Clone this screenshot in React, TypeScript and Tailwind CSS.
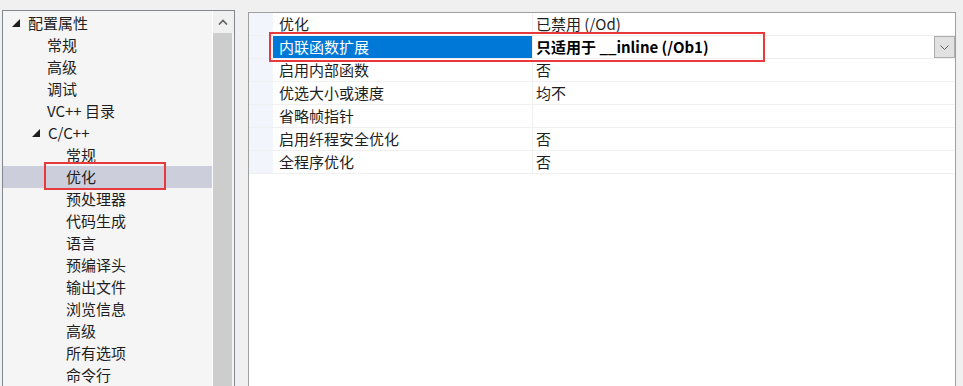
import React from "react";

type TreeItem = { label: string; level: number; expanded?: boolean; selected?: boolean };

const tree: TreeItem[] = [
  { label: "配置属性", level: 0, expanded: true },
  { label: "常规", level: 1 },
  { label: "高级", level: 1 },
  { label: "调试", level: 1 },
  { label: "VC++ 目录", level: 1 },
  { label: "C/C++", level: 1, expanded: true },
  { label: "常规", level: 2 },
  { label: "优化", level: 2, selected: true },
  { label: "预处理器", level: 2 },
  { label: "代码生成", level: 2 },
  { label: "语言", level: 2 },
  { label: "预编译头", level: 2 },
  { label: "输出文件", level: 2 },
  { label: "浏览信息", level: 2 },
  { label: "高级", level: 2 },
  { label: "所有选项", level: 2 },
  { label: "命令行", level: 2 },
];

const props = [
  { name: "优化", value: "已禁用 (/Od)" },
  { name: "内联函数扩展", value: "只适用于 __inline (/Ob1)", selected: true },
  { name: "启用内部函数", value: "否" },
  { name: "优选大小或速度", value: "均不" },
  { name: "省略帧指针", value: "" },
  { name: "启用纤程安全优化", value: "否" },
  { name: "全程序优化", value: "否" },
];

const indent = ["pl-[9px]", "pl-[29px]", "pl-[63px]"];

function Expander() {
  return (
    <svg width="8" height="8" viewBox="0 0 8 8" className="mr-[8px] shrink-0">
      <polygon points="8,0 8,8 0,8" fill="#1e1e1e" />
    </svg>
  );
}

export default function App() {
  return (
    <div
      className="relative flex h-[386px] w-[963px] overflow-hidden bg-[#f0f0f0] text-[15px] text-[#1e1e1e]"
      style={{ fontFamily: '"Microsoft YaHei UI", "Noto Sans CJK SC", "Noto Sans", sans-serif' }}
    >
      {/* tree panel */}
      <div className="ml-[2px] mt-[10px] flex h-[400px] w-[233px] border border-[#828790] bg-[#f5f5f5]">
        <div className="flex w-[209px] flex-col pt-[1px]">
          {tree.map((item, i) => (
            <div
              key={i}
              className={`flex h-[22px] items-center leading-[22px] ${item.selected ? "bg-[#cccedb]" : ""} ${
                item.expanded ? indent[item.level] : item.level === 1 ? "pl-[44px]" : indent[item.level]
              }`}
            >
              {item.expanded && <Expander />}
              <span className="whitespace-nowrap">{item.label}</span>
            </div>
          ))}
        </div>
        <div className="flex w-[22px] flex-col border-l border-white">
          <div className="flex h-[22px] items-center justify-center bg-[#f0f0f0] pr-[2px]">
            <svg width="10" height="6" viewBox="0 0 10 6">
              <path d="M1 5.5 L5 1.5 L9 5.5" stroke="#606060" strokeWidth="1.6" fill="none" />
            </svg>
          </div>
          <div className="mr-[2px] flex-1 bg-[#cdcdcd]" />
        </div>
      </div>

      {/* property grid */}
      <div className="ml-[13px] mt-[12px] h-[400px] w-[708px] border border-[#a0a0a0] bg-white">
        <div className="flex flex-col">
          {props.map((p, i) => (
            <div key={i} className="flex h-[23px] border-b border-[#f0f0f0]">
              <div className="w-[24px] bg-[#f2f6fc]" />
              <div
                className={`flex w-[260px] items-center border-r border-[#f0f0f0] pl-[6px] leading-[22px] ${
                  p.selected ? "bg-[#0078d7] text-white" : ""
                }`}
              >
                {p.name}
              </div>
              <div className={`flex flex-1 items-center pl-[3px] leading-[22px] ${p.selected ? "font-bold text-black" : ""}`}>
                <span className="flex-1 whitespace-pre">{p.value}</span>
                {p.selected && (
                  <div className="flex h-[22px] w-[21px] items-center justify-center border border-[#adadad] bg-[#e1e1e1]">
                    <svg width="9" height="5" viewBox="0 0 9 5">
                      <path d="M0.5 0.5 L4.5 4.5 L8.5 0.5" stroke="#606060" strokeWidth="1" fill="none" />
                    </svg>
                  </div>
                )}
              </div>
            </div>
          ))}
        </div>
      </div>

      {/* highlight boxes */}
      <div className="absolute left-[44px] top-[162px] h-[28px] w-[122px] border-2 border-[#e8393d]" />
      <div className="absolute left-[269px] top-[32px] h-[30px] w-[496px] border-2 border-[#e8393d]" />
    </div>
  );
}
